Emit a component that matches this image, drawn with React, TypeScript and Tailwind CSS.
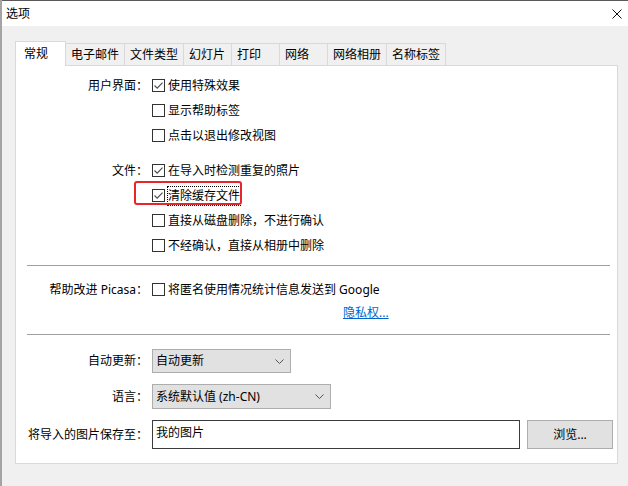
import React from "react";

const TABS = ["电子邮件", "文件类型", "幻灯片", "打印", "网络", "网络相册", "名称标签"];

function CheckBox({ checked }: { checked?: boolean }) {
  return (
    <span className="flex h-[13px] w-[13px] shrink-0 items-center justify-center border border-[#333333] bg-white">
      {checked && (
        <svg width="11" height="11" viewBox="0 0 11 11">
          <path d="M1.5 5.5 L4.2 8.2 L9.5 2.6" fill="none" stroke="#4a4a4a" strokeWidth="1.1" />
        </svg>
      )}
    </span>
  );
}

function Chevron() {
  return (
    <svg width="9" height="5" viewBox="0 0 9 5">
      <path d="M0.5 0.5 L4.5 4.5 L8.5 0.5" fill="none" stroke="#555" strokeWidth="1" />
    </svg>
  );
}

function Row({ label, children, h = "h-[25px]" }: { label?: string; children: React.ReactNode; h?: string }) {
  return (
    <div className={`flex items-center ${h}`}>
      <div className="w-[136px] shrink-0 pr-[4px] text-right">{label}</div>
      <div className="flex flex-1 items-center">{children}</div>
    </div>
  );
}

function Check({ label, checked }: { label: string; checked?: boolean }) {
  return (
    <div className="flex items-center gap-[3px]">
      <CheckBox checked={checked} />
      <span>{label}</span>
    </div>
  );
}

export default function App() {
  return (
    <div className="flex h-[486px] w-[628px] flex-col overflow-hidden border-l-2 border-[#a4a4a4] bg-[#f0f0f0] font-['Noto_Sans','Noto_Sans_CJK_SC',sans-serif] text-[12px] leading-[16px] text-black">
      {/* title bar */}
      <div className="flex h-[26px] shrink-0 items-center justify-between border-t border-[#5a5a5a] bg-white pl-[4px] pr-[6px]">
        <span className="text-[12px]">选项</span>
        <svg width="10" height="10" viewBox="0 0 10 10">
          <path d="M0.5 0.5 L9.5 9.5 M9.5 0.5 L0.5 9.5" stroke="#111" strokeWidth="1" />
        </svg>
      </div>

      <div className="pl-[13px] pt-[15px]">
        {/* tabs */}
        <div className="flex items-end">
          <div className="relative z-10 -mb-px flex h-[25px] w-[51px] items-center border border-b-0 border-[#d9d9d9] bg-white pl-[8px]">
            常规
          </div>
          {TABS.map((t) => (
            <div
              key={t}
              className="flex h-[22px] min-w-[48px] items-center border-t border-r border-[#d9d9d9] bg-[#f0f0f0] px-[5px]"
            >
              {t}
            </div>
          ))}
        </div>

        {/* panel */}
        <div className="flex h-[399px] w-[603px] flex-col border border-[#d9d9d9] bg-white pt-[7px]">
          <Row label="用户界面：">
            <Check label="使用特殊效果" checked />
          </Row>
          <Row>
            <Check label="显示帮助标签" />
          </Row>
          <Row>
            <Check label="点击以退出修改视图" />
          </Row>

          <div className="mt-[10px]">
            <Row label="文件：">
              <Check label="在导入时检测重复的照片" checked />
            </Row>
            <Row>
              <div className="relative flex items-center gap-[2px]">
                <div className="absolute left-[-18px] top-[-5px] h-[24px] w-[108px] rounded-[3px] border-2 border-[#e8252a]" />
                <CheckBox checked />
                <span className="border border-dotted border-black leading-[18px]">清除缓存文件</span>
              </div>
            </Row>
            <Row>
              <Check label="直接从磁盘删除，不进行确认" />
            </Row>
            <Row>
              <Check label="不经确认，直接从相册中删除" />
            </Row>
          </div>

          <div className="ml-[11px] mr-[7px] mt-[7px] h-px bg-[#a0a0a0]" />

          <div className="mt-[11px]">
            <Row label="帮助改进 Picasa：">
              <Check label="将匿名使用情况统计信息发送到 Google" />
            </Row>
            <Row h="h-[22px]">
              <span className="ml-[191px] text-[#0066cc] underline">隐私权...</span>
            </Row>
          </div>

          <div className="ml-[11px] mr-[7px] mt-[10px] h-px bg-[#a0a0a0]" />

          <div className="mt-[14px]">
            <Row label="自动更新：" h="h-[24px]">
              <div className="flex h-[24px] w-[139px] items-center justify-between border border-[#adadad] bg-[#e1e1e1] pl-[3px] pr-[6px]">
                <span>自动更新</span>
                <Chevron />
              </div>
            </Row>
          </div>
          <div className="mt-[11px]">
            <Row label="语言：">
              <div className="flex h-[25px] w-[179px] items-center justify-between border border-[#adadad] bg-[#e1e1e1] pl-[3px] pr-[6px]">
                <span>系统默认值 (zh-CN)</span>
                <Chevron />
              </div>
            </Row>
          </div>
          <div className="mt-[11px]">
            <Row label="将导入的图片保存至：" h="h-[29px]">
              <div className="h-[29px] w-[368px] border border-[#3c3c3c] bg-white pl-[3px] pt-[4px]">我的图片</div>
              <div className="ml-[7px] flex h-[29px] w-[86px] items-center justify-center border border-[#adadad] bg-[#e1e1e1]">
                浏览...
              </div>
            </Row>
          </div>
        </div>
      </div>
    </div>
  );
}
